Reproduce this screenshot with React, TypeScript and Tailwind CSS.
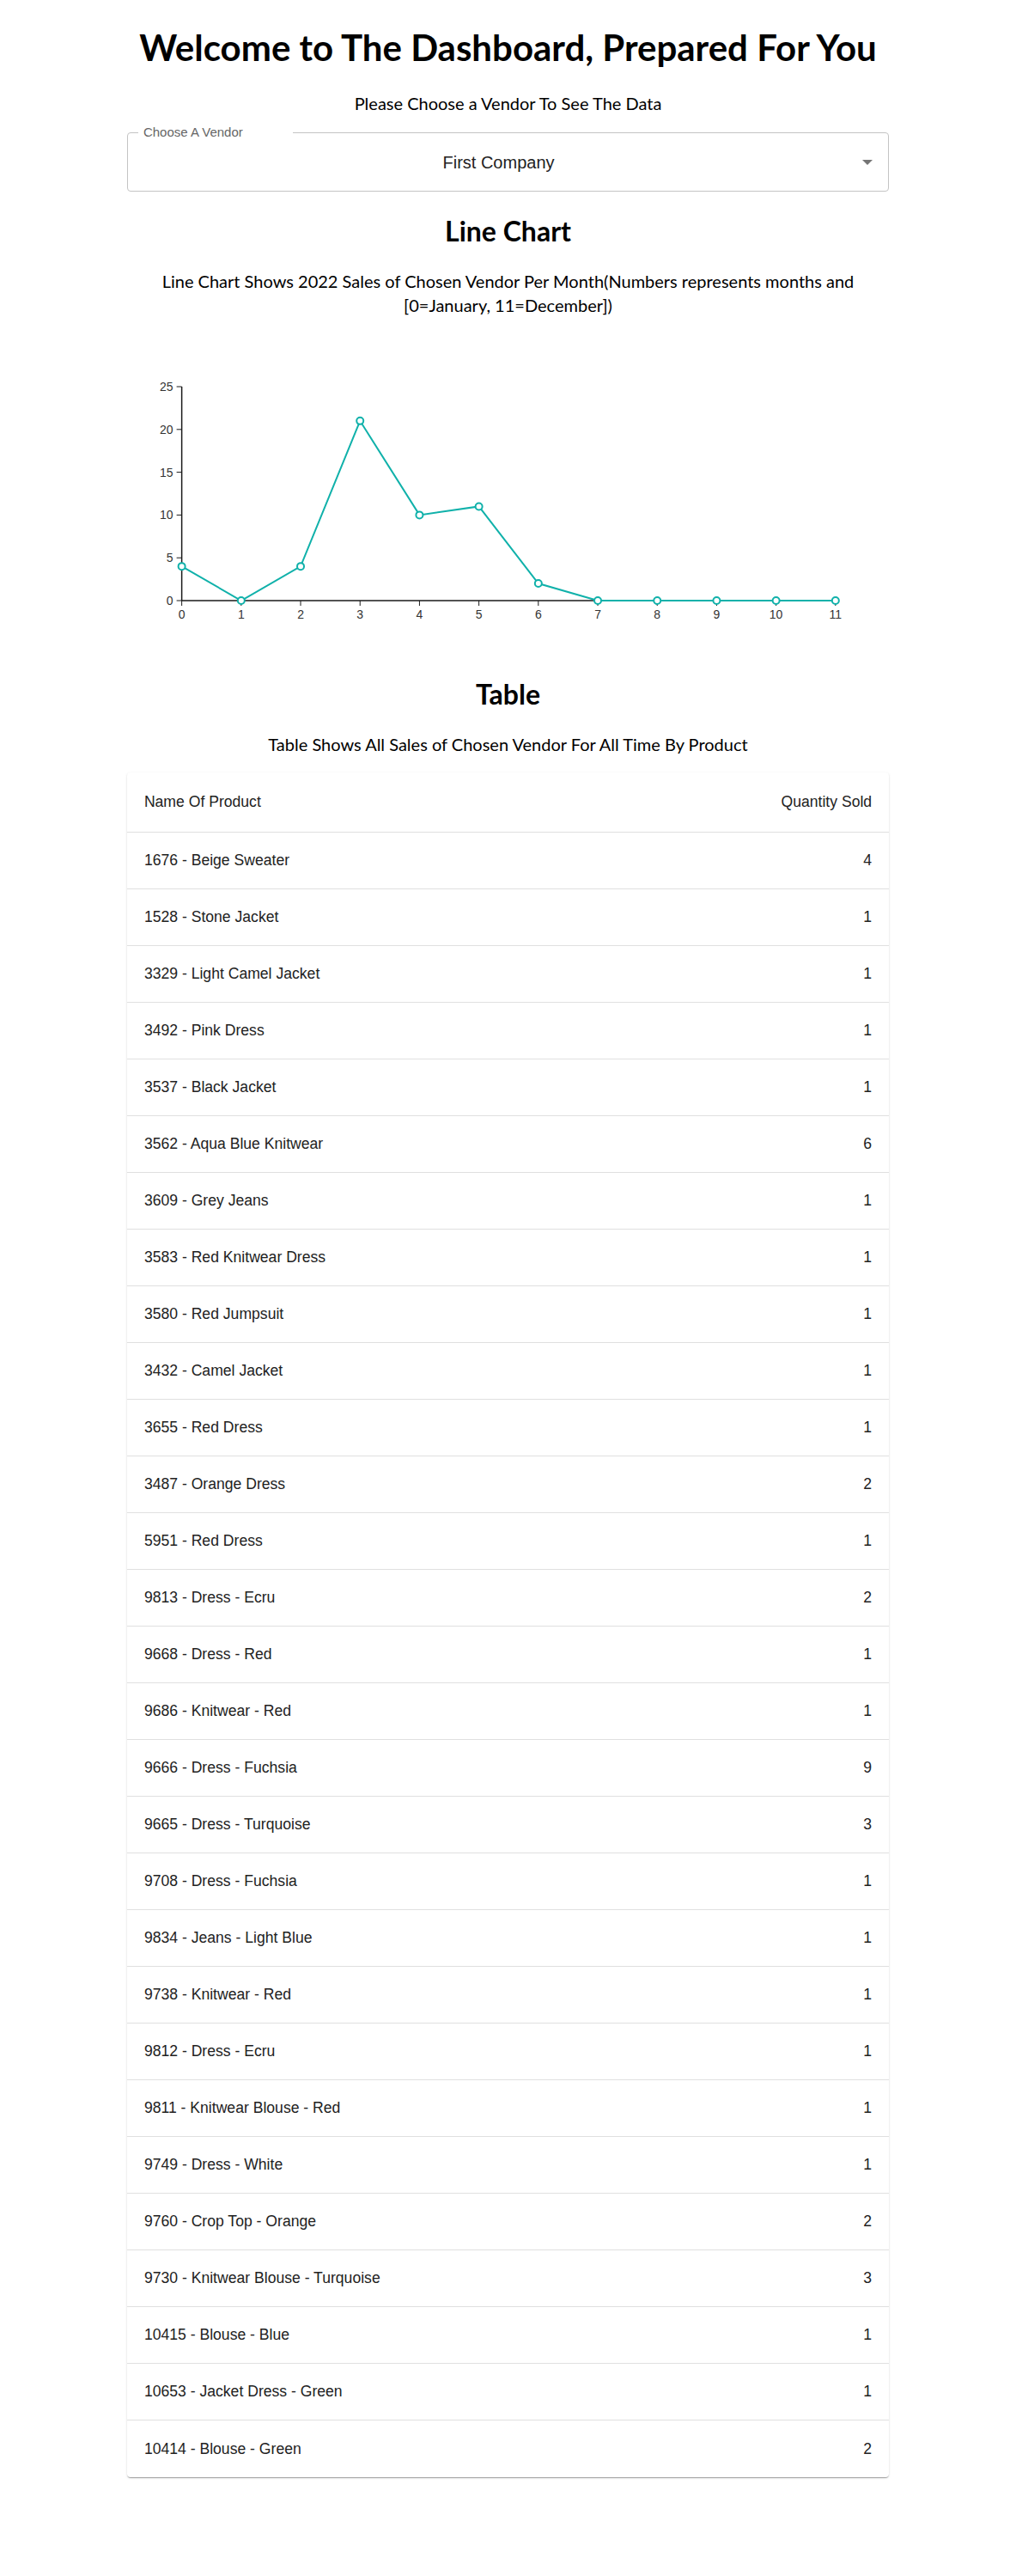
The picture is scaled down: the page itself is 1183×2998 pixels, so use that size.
import React from "react";

const sales = [4, 0, 4, 21, 10, 11, 2, 0, 0, 0, 0, 0];

const rows: [string, number][] = [
  ["1676 - Beige Sweater", 4],
  ["1528 - Stone Jacket", 1],
  ["3329 - Light Camel Jacket", 1],
  ["3492 - Pink Dress", 1],
  ["3537 - Black Jacket", 1],
  ["3562 - Aqua Blue Knitwear", 6],
  ["3609 - Grey Jeans", 1],
  ["3583 - Red Knitwear Dress", 1],
  ["3580 - Red Jumpsuit", 1],
  ["3432 - Camel Jacket", 1],
  ["3655 - Red Dress", 1],
  ["3487 - Orange Dress", 2],
  ["5951 - Red Dress", 1],
  ["9813 - Dress - Ecru", 2],
  ["9668 - Dress - Red", 1],
  ["9686 - Knitwear - Red", 1],
  ["9666 - Dress - Fuchsia", 9],
  ["9665 - Dress - Turquoise", 3],
  ["9708 - Dress - Fuchsia", 1],
  ["9834 - Jeans - Light Blue", 1],
  ["9738 - Knitwear - Red", 1],
  ["9812 - Dress - Ecru", 1],
  ["9811 - Knitwear Blouse - Red", 1],
  ["9749 - Dress - White", 1],
  ["9760 - Crop Top - Orange", 2],
  ["9730 - Knitwear Blouse - Turquoise", 3],
  ["10415 - Blouse - Blue", 1],
  ["10653 - Jacket Dress - Green", 1],
  ["10414 - Blouse - Green", 2],
];

// chart geometry, in svg units
const X0 = 63;
const STEP = 69.2;
const Y0 = 330;
const UNIT = 9.96;

const SalesChart = () => {
  const pts = sales.map((v, i) => [X0 + i * STEP, Y0 - v * UNIT]);
  const line = pts.map((p, i) => `${i ? "L" : "M"}${p[0]},${p[1]}`).join(" ");
  return (
    <svg viewBox="0 0 886 390" className="block w-full h-[390px]">
      {/* y axis */}
      <line x1={X0} y1={81} x2={X0} y2={Y0} stroke="#1a1a1a" strokeWidth={1.5} />
      {[0, 5, 10, 15, 20, 25].map((t) => (
        <g key={t}>
          <line x1={X0 - 6} y1={Y0 - t * UNIT} x2={X0} y2={Y0 - t * UNIT} stroke="#1a1a1a" />
          <text
            x={X0 - 10}
            y={Y0 - t * UNIT + 5}
            textAnchor="end"
            fontSize={14}
            fill="#333"
            fontFamily="'Liberation Sans', Arial, sans-serif"
          >
            {t}
          </text>
        </g>
      ))}
      {/* x axis */}
      <line x1={X0} y1={Y0} x2={X0 + 11 * STEP} y2={Y0} stroke="#1a1a1a" strokeWidth={1.5} />
      {sales.map((_, i) => (
        <g key={i}>
          <line x1={X0 + i * STEP} y1={Y0} x2={X0 + i * STEP} y2={Y0 + 6} stroke="#1a1a1a" />
          <text
            x={X0 + i * STEP}
            y={Y0 + 21}
            textAnchor="middle"
            fontSize={14}
            fill="#333"
            fontFamily="'Liberation Sans', Arial, sans-serif"
          >
            {i}
          </text>
        </g>
      ))}
      <path d={line} fill="none" stroke="#10b1aa" strokeWidth={2} />
      {pts.map((p, i) => (
        <circle key={i} cx={p[0]} cy={p[1]} r={4} fill="#fff" stroke="#10b1aa" strokeWidth={2} />
      ))}
    </svg>
  );
};

const App = () => {
  return (
    <div className="min-h-[2998px] bg-white pb-[115px] text-black font-['Lato','Open_Sans',sans-serif]">
      <h1 className="pt-[30px] h-[80px] text-center text-[42px] leading-[50px] font-bold">
        Welcome to The Dashboard, Prepared For You
      </h1>

      <div className="w-[75%] mx-auto">
        <p className="mt-[26px] text-center text-[20px] leading-[28px]">Please Choose a Vendor To See The Data</p>

        {/* vendor select */}
        <div className="relative mt-[20px] h-[69px] rounded-[4px] border border-[#c4c4c4] font-['Liberation_Sans',Arial,sans-serif]">
          <span className="absolute left-[12px] top-[-10px] w-[180px] bg-white pl-[6px] text-[15px] leading-[18px] text-[#666]">
            Choose A Vendor
          </span>
          <div className="flex h-full items-center justify-center pr-[22px] text-[20px] text-[#222]">First Company</div>
          <svg viewBox="0 0 12 6" className="absolute right-[18px] top-[31px] w-[12px] h-[6px]">
            <path d="M0 0 L12 0 L6 6 Z" fill="#757575" />
          </svg>
        </div>

        <h2 className="mt-[26px] text-center text-[32px] leading-[40px] font-bold">Line Chart</h2>
        <p className="mt-[24px] text-center text-[20px] leading-[28px]">
          Line Chart Shows 2022 Sales of Chosen Vendor Per Month(Numbers represents months and [0=January, 11=December])
        </p>

        <SalesChart />

        <h2 className="mt-[29px] text-center text-[32px] leading-[40px] font-bold">Table</h2>
        <p className="mt-[24px] text-center text-[20px] leading-[28px]">
          Table Shows All Sales of Chosen Vendor For All Time By Product
        </p>

        {/* sales table */}
        <div className="mt-[19px] rounded-[4px] bg-white font-['Liberation_Sans',Arial,sans-serif] text-[17.6px] text-[#222] shadow-[0_2px_1px_-1px_rgba(0,0,0,0.2),0_1px_1px_0_rgba(0,0,0,0.14),0_1px_3px_0_rgba(0,0,0,0.12)]">
          <div className="flex h-[70px] items-center justify-between border-b border-[#e0e0e0] px-5">
            <span>Name Of Product</span>
            <span>Quantity Sold</span>
          </div>
          {rows.map(([name, qty], i) => (
            <div
              key={name + i}
              className={`flex h-[66px] items-center justify-between px-5 ${i < rows.length - 1 ? "border-b border-[#e0e0e0]" : ""}`}
            >
              <span>{name}</span>
              <span>{qty}</span>
            </div>
          ))}
        </div>
      </div>
    </div>
  );
};

export default App;
